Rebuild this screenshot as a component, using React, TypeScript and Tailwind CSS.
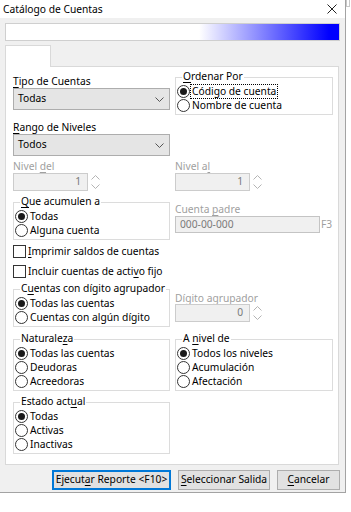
import type { ReactNode } from "react";
import clsx from "clsx";

const Key = ({ children }: { children: ReactNode }) => (
  <span className="underline underline-offset-[1.5px]">{children}</span>
);

const Radio = ({
  label,
  checked,
  focus,
}: {
  label: ReactNode;
  checked?: boolean;
  focus?: boolean;
}) => (
  <div className="flex h-[14px] items-center">
    <span className="ml-[1px] flex h-[13px] w-[13px] shrink-0 items-center justify-center rounded-full border border-[#333] bg-white">
      {checked && <span className="h-[7px] w-[7px] rounded-full bg-[#1a1a1a]" />}
    </span>
    <span
      className={clsx(
        "ml-[1px] px-[1px] leading-[13px]",
        focus && "outline outline-1 outline-dotted outline-black"
      )}
    >
      {label}
    </span>
  </div>
);

const Check = ({ label }: { label: ReactNode }) => (
  <div className="flex h-[14px] items-center">
    <span className="h-[13px] w-[13px] shrink-0 border border-[#333] bg-white" />
    <span className="ml-[2px] leading-[13px]">{label}</span>
  </div>
);

const Group = ({
  title,
  children,
  className,
}: {
  title: ReactNode;
  children: ReactNode;
  className?: string;
}) => (
  <div className={clsx("border border-[#dcdcdc] pb-[2px]", className)}>
    <div className="-mt-[9px] ml-[6px] h-[15px] w-fit bg-white px-[1px] leading-[15px]">
      {title}
    </div>
    {children}
  </div>
);

const Select = ({ value }: { value: string }) => (
  <div className="flex h-[22px] w-[157px] items-center justify-between border border-[#adadad] bg-[#e5e5e5] pl-[4px] pr-[5px]">
    <span>{value}</span>
    <svg width="9" height="5" viewBox="0 0 9 5" fill="none">
      <path d="M0.5 0.5 L4.5 4.5 L8.5 0.5" stroke="#555" strokeWidth="1" />
    </svg>
  </div>
);

const Spin = ({ value }: { value: string }) => (
  <div className="flex h-[18px] items-center">
    <div className="flex h-full w-[75px] items-center justify-end border border-[#cccccc] bg-[#f0f0f0] pr-[6px] text-[#7a7a7a]">
      {value}
    </div>
    <svg className="ml-[2px]" width="11" height="18" viewBox="0 0 11 18" fill="none">
      <path d="M1.5 6.5 L5.5 2.5 L9.5 6.5" stroke="#b4b4b4" strokeWidth="1" />
      <path d="M1.5 11.5 L5.5 15.5 L9.5 11.5" stroke="#b4b4b4" strokeWidth="1" />
    </svg>
  </div>
);

const Button = ({
  children,
  width,
  primary,
}: {
  children: ReactNode;
  width: string;
  primary?: boolean;
}) => (
  <div
    className={clsx(
      "flex h-[20px] items-center justify-center bg-[#e1e1e1]",
      width,
      primary ? "border-2 border-[#0078d7]" : "border border-[#adadad]"
    )}
  >
    {children}
  </div>
);

export default function App() {
  return (
    <div className="relative h-[512px] w-[351px] overflow-hidden bg-white font-['Noto_Sans',sans-serif] text-[10.25px] text-black">
      <div className="h-[493px] w-[346px] border-r border-b border-[#a3a3a3] bg-[#f0f0f0]">
        {/* title bar */}
        <div className="flex h-[18px] items-center justify-between bg-white pl-[3px] pr-[8px]">
          <span className="leading-[14px]">Catálogo de Cuentas</span>
          <svg width="10" height="10" viewBox="0 0 10 10" fill="none">
            <path d="M0.5 0.5 L9.5 9.5 M9.5 0.5 L0.5 9.5" stroke="#222" strokeWidth="1" />
          </svg>
        </div>

        <div className="px-[5px]">
          <div className="mt-[5px] h-[18px] w-[335px] border border-[#cfcfcf] bg-[linear-gradient(to_right,#ffffff_58%,#0000ff_97%)]" />

          {/* tab */}
          <div className="mt-[4px] h-[22px] w-[46px] border border-b-0 border-[#d9d9d9] bg-white" />

          {/* panel */}
          <div className="-mt-[1px] flex h-[399px] w-[334px] flex-col border border-[#d9d9d9] bg-white pl-[7px]">
            {/* tab joint */}
            <div className="-ml-[7px] -mt-[1px] h-[1px] w-[44px] bg-white" />

            <div className="mt-[7px] flex gap-[5px]">
              <div className="w-[157px]">
                <div className="h-[14px] leading-[14px]">
                  <Key>T</Key>ipo de Cuentas
                </div>
                <Select value="Todas" />
              </div>
              <Group
                className="mt-[3px] w-[158px]"
                title={
                  <>
                    <Key>O</Key>rdenar Por
                  </>
                }
              >
                <Radio label="Código de cuenta" checked focus />
                <Radio label="Nombre de cuenta" />
              </Group>
            </div>

            <div className="mt-[5px] w-[157px]">
              <div className="h-[14px] leading-[14px]">
                <Key>R</Key>ango de Niveles
              </div>
              <Select value="Todos" />
            </div>

            <div className="mt-[4px] flex gap-[5px] text-[#a0a0a0]">
              <div className="w-[157px]">
                <div className="h-[13px] leading-[13px]">
                  Nivel <Key>d</Key>el
                </div>
                <Spin value="1" />
              </div>
              <div className="w-[158px]">
                <div className="h-[13px] leading-[13px]">
                  Nivel a<Key>l</Key>
                </div>
                <Spin value="1" />
              </div>
            </div>

            <div className="mt-[11px] flex gap-[5px]">
              <Group
                className="w-[157px]"
                title={
                  <>
                    <Key>Q</Key>ue acumulen a
                  </>
                }
              >
                <Radio label="Todas" checked />
                <Radio label="Alguna cuenta" />
              </Group>
              <div className="w-[158px] text-[#a0a0a0]">
                <div className="mt-[1px] h-[13px] leading-[13px]">
                  Cuenta <Key>p</Key>adre
                </div>
                <div className="flex items-center">
                  <div className="flex h-[17px] w-[145px] items-center border border-[#c4c4c4] bg-[#f0f0f0] pl-[4px] text-[#7a7a7a]">
                    000-00-000
                  </div>
                  <span className="ml-[1px]">F3</span>
                </div>
              </div>
            </div>

            <div className="mt-[4px]">
              <Check
                label={
                  <>
                    <Key>I</Key>mprimir saldos de cuentas
                  </>
                }
              />
            </div>
            <div className="mt-[6px]">
              <Check
                label={
                  <>
                    Incluir cuentas de acti<Key>v</Key>o fijo
                  </>
                }
              />
            </div>

            <div className="mt-[11px] flex gap-[5px]">
              <Group
                className="w-[157px]"
                title={
                  <>
                    C<Key>u</Key>entas con dígito agrupador
                  </>
                }
              >
                <Radio label="Todas las cuentas" checked />
                <Radio label="Cuentas con algún dígito" />
              </Group>
              <div className="w-[158px] text-[#a0a0a0]">
                <div className="mt-[3px] h-[12px] leading-[12px]">Dígito agrupador</div>
                <Spin value="0" />
              </div>
            </div>

            <div className="mt-[12px] flex gap-[5px]">
              <Group
                className="w-[157px]"
                title={
                  <>
                    Naturale<Key>z</Key>a
                  </>
                }
              >
                <Radio label="Todas las cuentas" checked />
                <Radio label="Deudoras" />
                <Radio label="Acreedoras" />
              </Group>
              <Group
                className="w-[158px]"
                title={
                  <>
                    A <Key>n</Key>ivel de
                  </>
                }
              >
                <Radio label="Todos los niveles" checked />
                <Radio label="Acumulación" />
                <Radio label="Afectación" />
              </Group>
            </div>

            <div className="mt-[11px]">
              <Group
                className="w-[157px]"
                title={
                  <>
                    Estado act<Key>u</Key>al
                  </>
                }
              >
                <Radio label="Todas" checked />
                <Radio label="Activas" />
                <Radio label="Inactivas" />
              </Group>
            </div>
          </div>

          {/* buttons */}
          <div className="mt-[5px] flex w-[335px] justify-end gap-[7px]">
            <Button width="w-[119px]" primary>
              <span>
                Ejecut<Key>a</Key>r Reporte &lt;F10&gt;
              </span>
            </Button>
            <Button width="w-[92px]">
              <span>
                <Key>S</Key>eleccionar Salida
              </span>
            </Button>
            <Button width="w-[63px]">
              <span>
                <Key>C</Key>ancelar
              </span>
            </Button>
          </div>
        </div>
      </div>
      <div className="absolute right-[1px] top-0 h-[7px] w-[4px] border border-t-0 border-[#c8c8c8]" />
    </div>
  );
}
